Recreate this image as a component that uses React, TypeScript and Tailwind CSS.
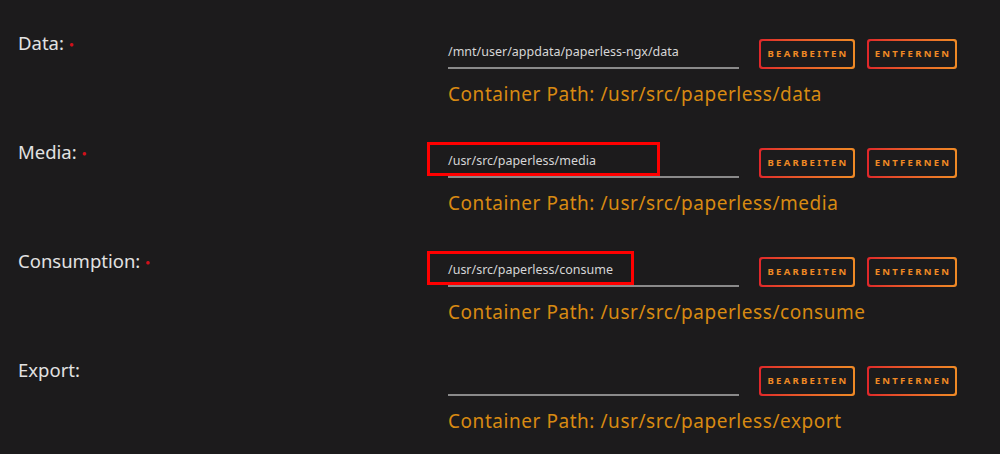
const rows = [
  { label: "Data:", required: true, host: "/mnt/user/appdata/paperless-ngx/data", container: "/usr/src/paperless/data", mark: 0 },
  { label: "Media:", required: true, host: "/usr/src/paperless/media", container: "/usr/src/paperless/media", mark: 233 },
  { label: "Consumption:", required: true, host: "/usr/src/paperless/consume", container: "/usr/src/paperless/consume", mark: 207 },
  { label: "Export:", required: false, host: "", container: "/usr/src/paperless/export", mark: 0 },
]

function GradientButton({ children, width }: { children: string; width: string }) {
  return (
    <div className={`rounded-[3px] bg-gradient-to-r from-[#e0262a] to-[#ef8a25] p-[2px] ${width}`}>
      <div className="flex h-[26px] items-center justify-center rounded-[2px] bg-[#1c1b1c] pl-[2px] text-[9.5px] font-bold tracking-[0.24em] text-[#f08a24]">
        {children}
      </div>
    </div>
  )
}

export default function App() {
  return (
    <div
      className="flex h-[454px] w-[1000px] flex-col gap-[34px] bg-[#1c1b1c] pt-[31px]"
      style={{ fontFamily: '"Noto Sans", "Open Sans", sans-serif' }}
    >
      {rows.map((row) => (
        <div key={row.label} className="flex">
          <div className="flex w-[448px] items-center pl-[18px] self-start text-[18.5px] leading-[24px] text-[#e2e2e2]">
            {row.label}
            {row.required && <span className="ml-[5px] mt-[2px] text-[8px] leading-none text-[#d0101a]">●</span>}
          </div>
          <div className="flex flex-col pt-[8px]">
            <div className="flex items-end">
              <div className="relative flex h-[30px] w-[291px] items-center border-b-2 border-[#8a8a8a] pb-[2px] text-[12.5px] text-[#d6d6d6]">
                {row.host}
                {row.mark > 0 && (
                  <div
                    className="absolute left-[-21px] top-[-6px] h-[34px] border-[3px] border-[#ff0000]"
                    style={{ width: row.mark }}
                  />
                )}
              </div>
              <div className="ml-[20px] flex gap-[12px]">
                <GradientButton width="w-[96px]">BEARBEITEN</GradientButton>
                <GradientButton width="w-[90px]">ENTFERNEN</GradientButton>
              </div>
            </div>
            <div className="mt-[13px] text-[19px] leading-[24px] tracking-[0.55px] text-[#d88a12]">
              Container Path: {row.container}
            </div>
          </div>
        </div>
      ))}
    </div>
  )
}
